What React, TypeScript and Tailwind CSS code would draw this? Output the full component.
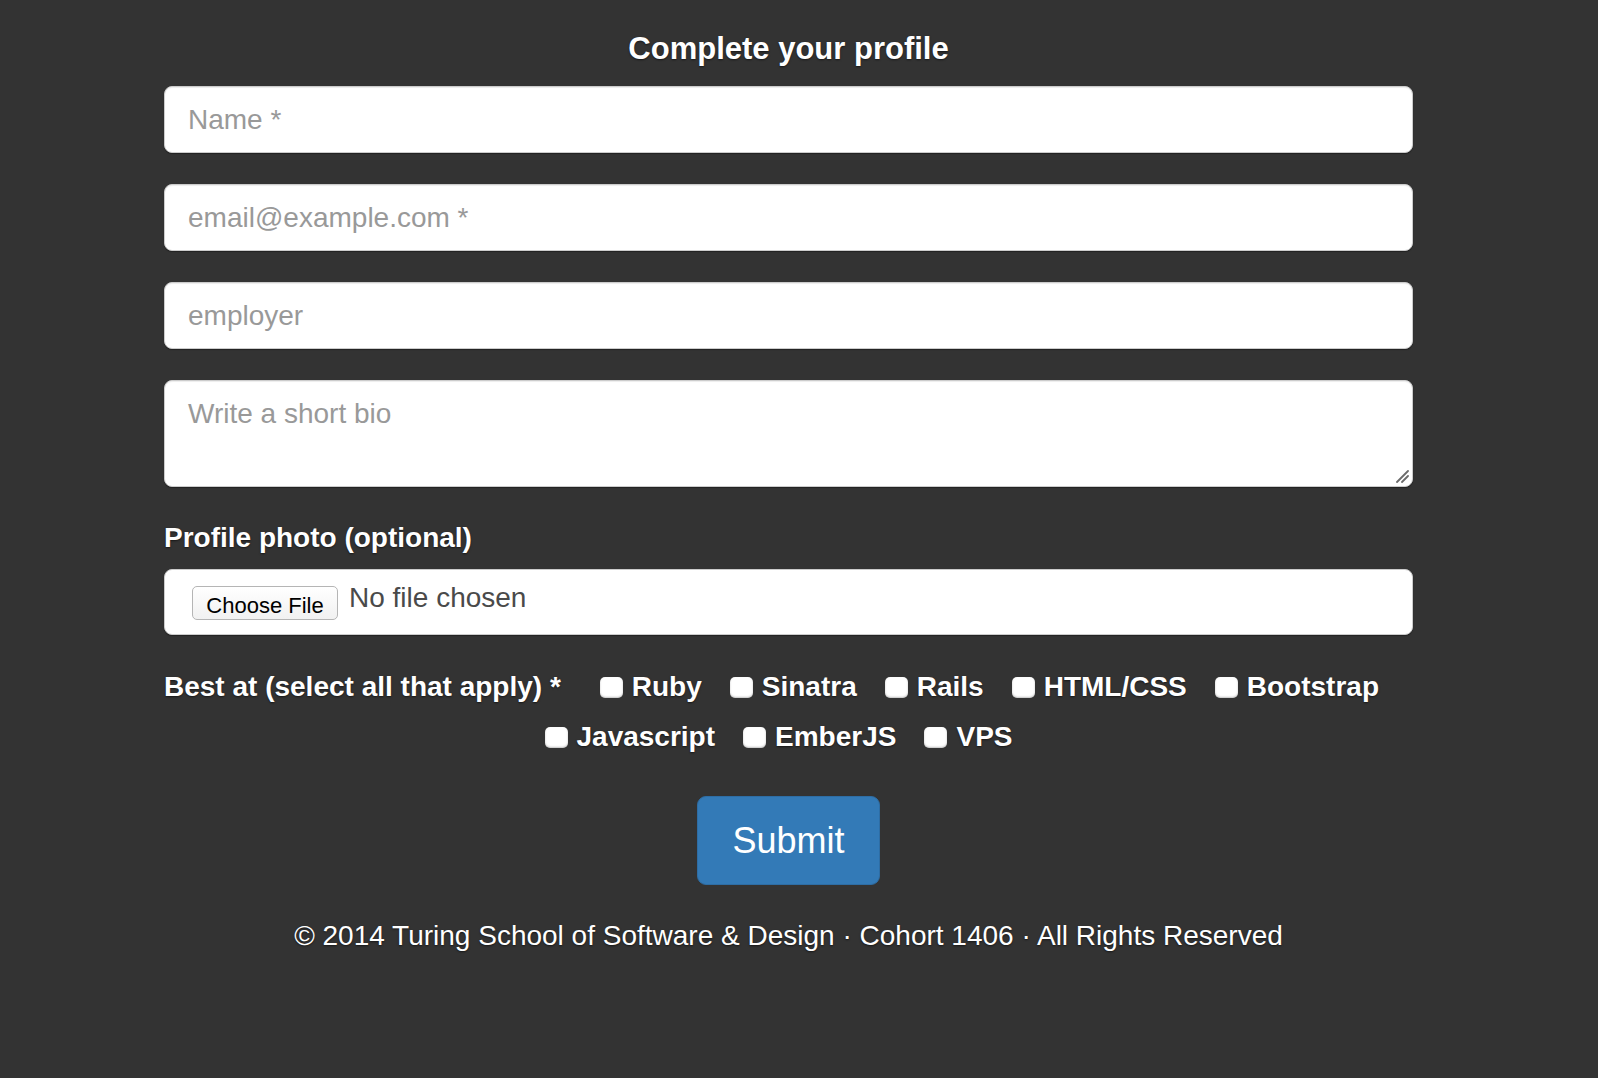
import React from "react";

const skillsTop = ["Ruby", "Sinatra", "Rails", "HTML/CSS", "Bootstrap"];
const skillsBottom = ["Javascript", "EmberJS", "VPS"];

const shadow = "[text-shadow:0_1px_2px_rgba(0,0,0,0.55)]";

const inputClass =
  "block w-full h-[67px] mb-[31px] px-[23px] bg-white border border-[#ccc] rounded-[8px] text-[28px] text-[#555] placeholder:text-[#999] shadow-[inset_0_1px_1px_rgba(0,0,0,0.075),0_1px_1px_rgba(0,0,0,0.35)] outline-none";

function Skill({ name }: { name: string }) {
  return (
    <label className="flex items-center ml-[28px] cursor-pointer">
      <input
        type="checkbox"
        className="appearance-none w-[23px] h-[21px] rounded-[5px] bg-white shadow-[inset_0_-1px_2px_rgba(0,0,0,0.25)]"
      />
      <span className={`ml-[9px] text-[28px] font-bold text-white ${shadow}`}>
        {name}
      </span>
    </label>
  );
}

export default function App() {
  return (
    <div className="min-h-screen bg-[#333] font-['Liberation_Sans',Arial,sans-serif]">
      <form className="ml-[164px] w-[1249px] pt-[32px]" onSubmit={e => e.preventDefault()}>
        <h3 className={`text-center text-[31px] leading-[34px] font-bold text-white mb-[20px] ${shadow}`}>
          Complete your profile
        </h3>

        <input type="text" placeholder="Name *" className={inputClass} />
        <input type="email" placeholder="email@example.com *" className={inputClass} />
        <input type="text" placeholder="employer" className={inputClass} />
        <div className="relative">
          <textarea
            placeholder="Write a short bio"
            className="block w-full h-[107px] px-[23px] pt-[14px] resize-none bg-white border border-[#ccc] rounded-[8px] text-[28px] leading-[38px] text-[#555] placeholder:text-[#999] shadow-[inset_0_1px_1px_rgba(0,0,0,0.075),0_1px_1px_rgba(0,0,0,0.35)] outline-none"
          />
          {/* resize grip */}
          <svg
            className="absolute right-[4px] bottom-[4px] pointer-events-none"
            width="14"
            height="14"
            viewBox="0 0 14 14"
          >
            <path d="M2 13 L13 2 M7 13 L13 7" stroke="#6b6b6b" strokeWidth="1.8" strokeLinecap="round" />
          </svg>
        </div>

        {/* Profile photo */}
        <p className={`mt-[35px] text-[28px] leading-[32px] font-bold text-white ${shadow}`}>
          Profile photo (optional)
        </p>
        <div className="mt-[15px] h-[66px] flex items-start pl-[27px] bg-white border border-[#ccc] rounded-[8px] shadow-[0_1px_1px_rgba(0,0,0,0.35)]">
          <button
            type="button"
            className="mt-[16px] w-[146px] h-[34px] pt-[6px] rounded-[5px] border border-[#b5b5b5] bg-gradient-to-b from-white to-[#f1f1f1] text-[22px] text-black leading-none"
          >
            Choose File
          </button>
          <span className="mt-[12px] ml-[11px] text-[28px] leading-[32px] text-[#4a4a4a]">
            No file chosen
          </span>
        </div>

        {/* Skills */}
        <div className="mt-[32px] h-[40px] flex items-center">
          <span className={`text-[28px] font-bold text-white ${shadow}`}>
            Best at (select all that apply) *
          </span>
          <div className="flex items-center ml-[11px]">
            {skillsTop.map(s => (
              <Skill key={s} name={s} />
            ))}
          </div>
        </div>
        <div className="mt-[10px] h-[40px] flex items-center justify-center pr-[48px]">
          {skillsBottom.map(s => (
            <Skill key={s} name={s} />
          ))}
        </div>

        <div className="mt-[39px] flex justify-center">
          <button
            type="submit"
            className="w-[183px] h-[89px] rounded-[9px] bg-[#337ab7] border border-[#2e6da4] text-[36px] text-white"
          >
            Submit
          </button>
        </div>

        <p className={`mt-[35px] text-center text-[28px] leading-[32px] text-white ${shadow}`}>
          © 2014 Turing School of Software &amp; Design · Cohort 1406 · All Rights Reserved
        </p>
      </form>
    </div>
  );
}
